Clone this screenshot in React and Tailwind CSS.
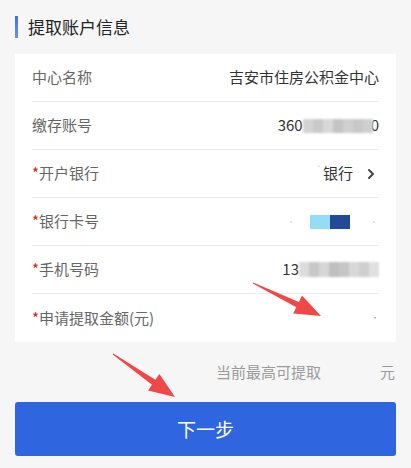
import React from 'react';
import { ChevronRight } from 'lucide-react';

const font = { fontFamily: '"Noto Sans CJK SC", "Noto Sans", sans-serif' };

const Blur = ({ colors, h = 'h-[14px]' }) => (
  <span className={`inline-flex ${h} blur-[1px]`}>
    {colors.map((c, i) => (
      <span key={i} className="w-[10px] h-full" style={{ backgroundColor: c }} />
    ))}
  </span>
);

const Row = ({ label, required, children, last }) => (
  <div className={`flex items-center justify-between h-[48px] ${last ? '' : 'border-b border-[#ececec]'}`}>
    <span className="text-[15px] text-[#666]">
      {required && <span className="text-[#c81e1e]">*</span>}
      {label}
    </span>
    <div className="flex items-center text-[15px] text-[#333]">{children}</div>
  </div>
);

const Arrows = () => (
  <svg className="absolute inset-0 pointer-events-none" width="411" height="468" viewBox="0 0 411 468">
    <polygon
      fill="#f04848"
      points="253.2,282.6 298.9,301.9 302,295.6 321,316 293.2,313.6 296.3,307.3 252.8,283.4"
    />
    <polygon
      fill="#f04848"
      points="113.3,353.6 155.4,379.7 159.4,374 175,397 148,390.4 152,384.7 112.7,354.4"
    />
  </svg>
);

export default function App() {
  return (
    <div className="relative w-[411px] h-[468px] bg-[#f6f6f6] overflow-hidden" style={font}>
      <div className="px-[15px] pt-[16px]">
        <div className="flex items-center h-[22px]">
          <span className="w-[3px] h-[22px] bg-gradient-to-b from-[#3d6fe3] to-[#6b94ee]" />
          <span className="ml-[10px] text-[17px] text-[#222]">提取账户信息</span>
        </div>

        <div className="mt-[16px] bg-white px-[17px]">
          <Row label="中心名称">吉安市住房公积金中心</Row>
          <Row label="缴存账号">
            <span>360</span>
            <Blur colors={['#d4d4d4', '#c9c9c9', '#d8d8d8', '#c4c4c4', '#d0d0d0', '#c8c8c8', '#cfcfcf']} />
            <span className="-ml-[2px]">0</span>
          </Row>
          <Row label="开户银行" required>
            <span className="text-[#ccc] text-[10px] mr-[1px] -mt-[8px]">`</span>
            <span>银行</span>
            <ChevronRight className="ml-[10px] w-[16px] h-[16px] text-[#444]" strokeWidth={3} />
          </Row>
          <Row label="银行卡号" required>
            <span className="text-[#ddd] text-[10px] mr-[14px]">·</span>
            <span className="inline-flex h-[14px]">
              <span className="w-[20px] h-full bg-[#95dcf6]" />
              <span className="w-[20px] h-full bg-[#24499a]" />
            </span>
            <span className="text-[#ddd] text-[10px] ml-[19px]">·</span>
          </Row>
          <Row label="手机号码" required>
            <span>13</span>
            <Blur h="h-[15px]" colors={['#dcdcdc', '#c8c8c8', '#d6d6d6', '#bfbfbf', '#c6c6c6', '#d8d8d8', '#cfcfcf', '#e0e0e0']} />
          </Row>
          <Row label="申请提取金额(元)" required last>
            <span className="text-[#999] text-[8px]">·</span>
          </Row>
        </div>

        <div className="flex justify-end items-center h-[60px] text-[15px] text-[#9a9a9a]">
          <span>当前最高可提取</span>
          <span className="ml-[59px] mr-[1px]">元</span>
        </div>

        <button className="w-full h-[54px] rounded-[3px] bg-[#3065e0] text-white text-[19px]">
          下一步
        </button>
      </div>
      <Arrows />
    </div>
  );
}
